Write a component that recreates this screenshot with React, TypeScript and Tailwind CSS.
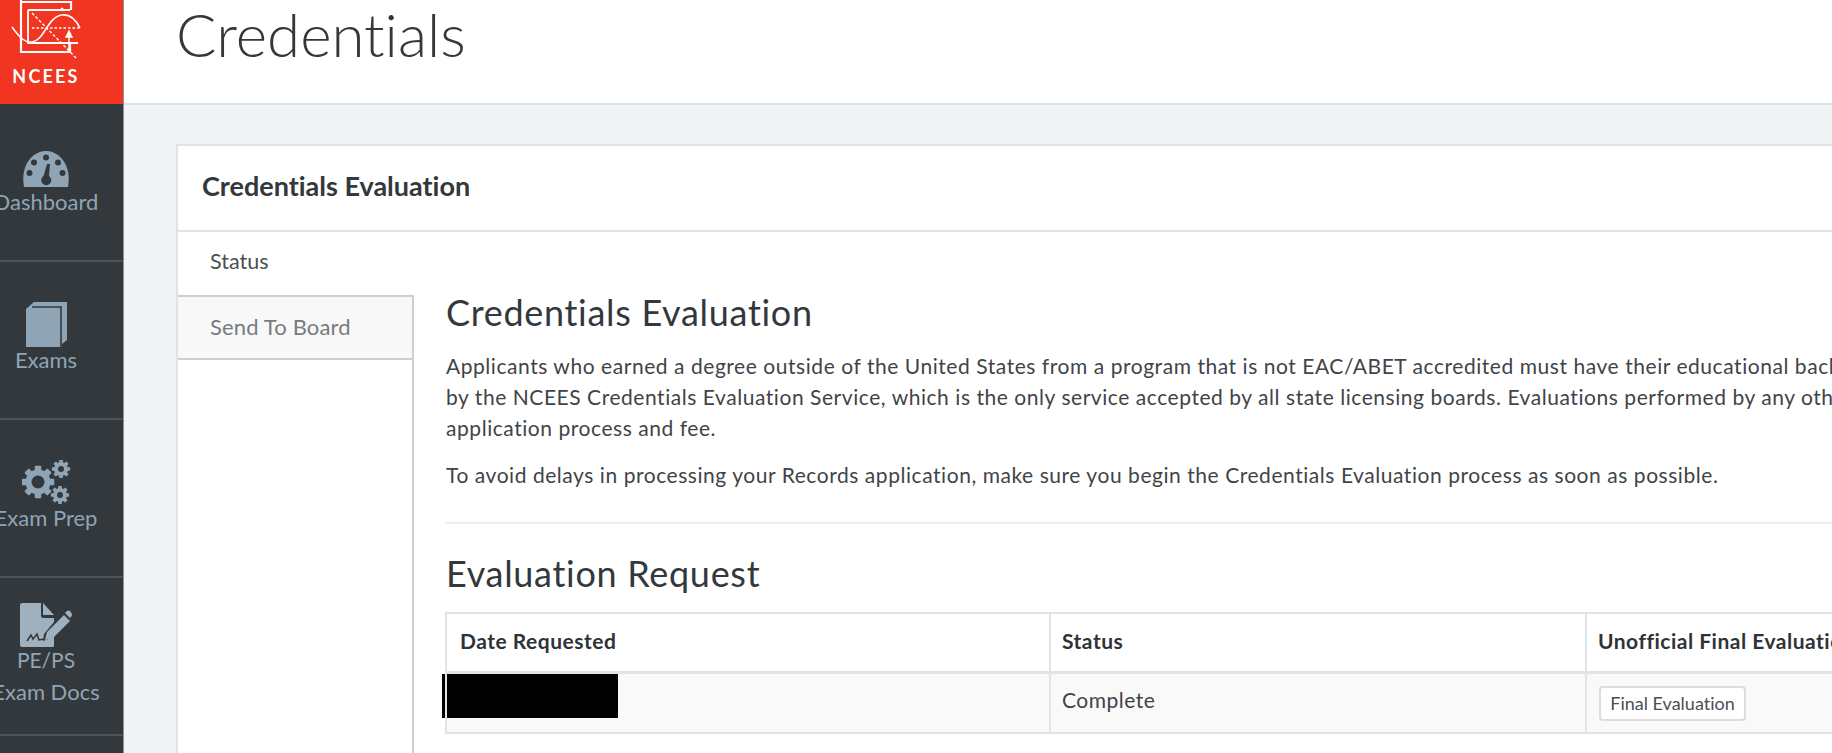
import React from "react";

const font = { fontFamily: '"Lato", "Liberation Sans", sans-serif', fontVariantLigatures: "none" as const };

function Logo() {
  return (
    <svg width="92" height="62" viewBox="0 0 92 62" fill="none" stroke="#fff" strokeWidth="1.400" className="block">
      <path d="M21 0 V52 H70 V44 M21 2 H71 V10" strokeWidth="2.200" />
      <path d="M28 10 H70 M28 10 V43 H78" strokeWidth="1.800" />
      <path d="M12 27 C20 38 25 43 32 42 C45 40 47 17 62 15 C70 14 76 20 80 28" strokeWidth="1.600" />
      <path d="M32 13 L77 59" strokeDasharray="3 2" />
      <path d="M32 28 H80" strokeDasharray="2.500 2" />
      <path d="M69 52 V36" />
      <path d="M69 31 l-3 6 h6 z" fill="#fff" />
      <circle cx="62" cy="9" r="1.500" fill="#fff" stroke="none" />
    </svg>
  );
}

function Gauge() {
  return (
    <svg width="46" height="36" viewBox="0 0 46 36" className="mb-[2px]">
      <path d="M1 36 C-3 14 10 0 23 0 C36 0 49 14 45 36 Z" fill="#8fa5b5" />
      <circle cx="23" cy="6.500" r="3" fill="#33383c" />
      <circle cx="11" cy="11.500" r="3" fill="#33383c" />
      <circle cx="35" cy="11.500" r="3" fill="#33383c" />
      <circle cx="6.500" cy="22" r="3" fill="#33383c" />
      <circle cx="39.500" cy="22" r="3" fill="#33383c" />
      <path d="M24 13 L27 13 L26 25 A5 5 0 1 1 20.500 25 Z" fill="#33383c" />
    </svg>
  );
}

function Book() {
  return (
    <svg width="41" height="45" viewBox="0 0 41 45">
      <path d="M0 7 L8 0 H41 V38 L36 42 V45 H0 Z" fill="#8fa5b5" />
      <path d="M6 5 H35 V45" fill="none" stroke="#33383c" strokeWidth="1.600" />
    </svg>
  );
}

function Gear({ cx, cy, r, teeth, hole }: { cx: number; cy: number; r: number; teeth: number; hole: number }) {
  const items = Array.from({ length: teeth / 2 }, (_, i) => (360 / teeth) * i);
  return (
    <g>
      {items.map((a) => (
        <rect key={a} x={cx - r * 0.26} y={cy - r * 1.3} width={r * 0.52} height={r * 2.6} rx={r * 0.08} fill="#8fa5b5" transform={`rotate(${a} ${cx} ${cy})`} />
      ))}
      <circle cx={cx} cy={cy} r={r} fill="#8fa5b5" />
      <circle cx={cx} cy={cy} r={hole} fill="#33383c" />
    </g>
  );
}

function Gears() {
  return (
    <svg width="49" height="45" viewBox="0 0 49 45">
      <Gear cx={16} cy={22} r={12.500} teeth={8} hole={6.500} />
      <Gear cx={39} cy={9} r={7} teeth={8} hole={3} />
      <Gear cx={38} cy={35} r={7} teeth={8} hole={3} />
    </svg>
  );
}

function Doc() {
  return (
    <svg width="52" height="44" viewBox="0 0 52 44">
      <path d="M0 2 Q0 0 2 0 H21 V13 Q21 15 23 15 H34 V19 L24 31 L23 38 L31 35 L34 32 V43 Q34 44 32 44 H2 Q0 44 0 42 Z" fill="#9fb1bf" />
      <path d="M23 0 L34 12 H23 Z" fill="#9fb1bf" />
      <path d="M7 38 L11 32 L13 36 L17 31 L19 37 L24 36" stroke="#33383c" strokeWidth="1.500" fill="none" />
      <path d="M27 29 L44 12 L50 18 L33 35 L25 37 Z" fill="#9fb1bf" />
      <path d="M45 10 L47 8 Q49 7 50 8 L52 11 Q52 13 51 14 L50 15 Z" fill="#9fb1bf" />
    </svg>
  );
}

function NavItem({ icon, label }: { icon: React.ReactNode; label: string }) {
  return (
    <div className="flex h-[158px] shrink-0 flex-col items-center border-b-2 border-[#4d5256] pr-[31px] pt-[39px]">
      <div className="flex h-[46px] items-end justify-center">{icon}</div>
      <div className="whitespace-nowrap text-[22px] leading-[26px] text-[#8fa5b5]">{label}</div>
    </div>
  );
}

export default function App() {
  return (
    <div style={font} className="flex h-[753px] w-[1832px] overflow-hidden bg-[#f0f4f7] text-[#33383c]">
      <aside className="flex w-[124px] shrink-0 flex-col border-r border-[#8d9093] bg-[#33383c]">
        <div className="flex h-[104px] shrink-0 flex-col overflow-hidden bg-[#f13521]">
          <div className="flex w-[92px] flex-col items-center">
            <div className="h-[62px]"><Logo /></div>
            <div className="mt-[2px] whitespace-nowrap text-[18px] font-bold leading-[24px] tracking-[2.200px] text-white">NCEES</div>
          </div>
        </div>
        <NavItem icon={<Gauge />} label="Dashboard" />
        <NavItem icon={<Book />} label="Exams" />
        <NavItem icon={<Gears />} label="Exam Prep" />
        <div className="flex h-[158px] shrink-0 flex-col items-center border-b-2 border-[#4d5256] pr-[31px] pt-[25px]">
          <Doc />
          <div className="-mt-[3px] whitespace-nowrap text-[21px] leading-[32px] text-[#8fa5b5]">PE/PS</div>
          <div className="whitespace-nowrap text-[22px] leading-[32px] text-[#8fa5b5]">Exam Docs</div>
        </div>
      </aside>
      <main className="flex min-w-0 flex-1 flex-col">
        <header className="flex h-[105px] shrink-0 items-center border-b-2 border-[#dce3e9] bg-white pb-[36px] pl-[52px]">
          <h1 className="whitespace-nowrap text-[60px] font-light leading-none text-[#33383c]">Credentials</h1>
        </header>
        <div className="pl-[52px] pt-[39px]">
          <section className="flex h-[700px] w-[2200px] flex-col border-2 border-[#dce3e9] bg-white">
            <div className="flex h-[86px] shrink-0 items-center border-b-2 border-[#e3e3e3] pb-[6px] pl-[24px] text-[27px] font-bold leading-none text-[#33383c]">
              Credentials Evaluation
            </div>
            <div className="flex min-h-0 flex-1">
              <div className="flex w-[236px] shrink-0 flex-col">
                <div className="flex h-[63px] items-center pb-[5px] pl-[32px] text-[21.500px] text-[#4a4f53]">Status</div>
                <div className="flex h-[65px] items-center border-y-2 border-r-2 border-[#cfcfcf] bg-[#f8f8f8] pb-[3px] pl-[32px] text-[22px] tracking-[0.150px] text-[#777c80]">Send To Board</div>
                <div className="flex-1 border-r-2 border-[#cfcfcf]"></div>
              </div>
              <div className="flex-1 pl-[32px] pt-[60px]">
                <h2 className="whitespace-nowrap text-[36px] font-normal leading-[40px] tracking-[0.700px] text-[#33383c]">Credentials Evaluation</h2>
                <p className="mt-[18px] whitespace-nowrap text-[21px] leading-[31px] tracking-[0.550px] text-[#3f4448]">
                  Applicants who earned a degree outside of the United States from a program that is not EAC/ABET accredited must have their educational background evaluated
                  <br />
                  by the NCEES Credentials Evaluation Service, which is the only service accepted by all state licensing boards. Evaluations performed by any other service are not accepted
                  <br />
                  application process and fee.
                </p>
                <p className="mt-[16px] whitespace-nowrap text-[21px] leading-[31px] tracking-[0.550px] text-[#3f4448]">
                  To avoid delays in processing your Records application, make sure you begin the Credentials Evaluation process as soon as possible.
                </p>
                <hr className="-ml-[1px] mt-[32px] w-[1700px] border-t-2 border-[#eeeeee]" />
                <h2 className="mt-[29px] whitespace-nowrap text-[36px] font-normal leading-[40px] tracking-[0.700px] text-[#33383c]">Evaluation Request</h2>
                <table className="-ml-[1px] mt-[19px] w-[1700px] table-fixed border-collapse text-[21px] tracking-[0.500px]">
                  <colgroup>
                    <col className="w-[604px]" />
                    <col className="w-[536px]" />
                    <col />
                  </colgroup>
                  <thead>
                    <tr className="h-[59px]">
                      <th className="whitespace-nowrap border-2 border-b-[3px] border-[#e3e3e3] pb-[3px] pl-[13px] text-left font-bold text-[#2f3337]">Date Requested</th>
                      <th className="whitespace-nowrap border-2 border-b-[3px] border-[#e3e3e3] pb-[3px] pl-[11px] text-left font-bold text-[#2f3337]">Status</th>
                      <th className="whitespace-nowrap border-2 border-b-[3px] border-[#e3e3e3] pb-[3px] pl-[11px] text-left font-bold text-[#2f3337]">Unofficial Final Evaluation</th>
                    </tr>
                  </thead>
                  <tbody>
                    <tr className="h-[61px] bg-[#f9f9f9]">
                      <td className="border-2 border-[#e3e3e3]">
                        <div className="-ml-[5px] -mt-[14px] h-[44px] w-[176px] bg-black"></div>
                      </td>
                      <td className="border-2 border-[#e3e3e3] pb-[6px] pl-[11px] text-[#3f4448]">Complete</td>
                      <td className="border-2 border-[#e3e3e3] pl-[11px]">
                        <button className="ml-[1px] mt-[1px] h-[35px] w-[147px] whitespace-nowrap rounded-[4px] border-2 border-[#dddddd] bg-white text-center text-[18px] leading-none tracking-normal text-[#4a4f53]">Final Evaluation</button>
                      </td>
                    </tr>
                  </tbody>
                </table>
              </div>
            </div>
          </section>
        </div>
      </main>
    </div>
  );
}
